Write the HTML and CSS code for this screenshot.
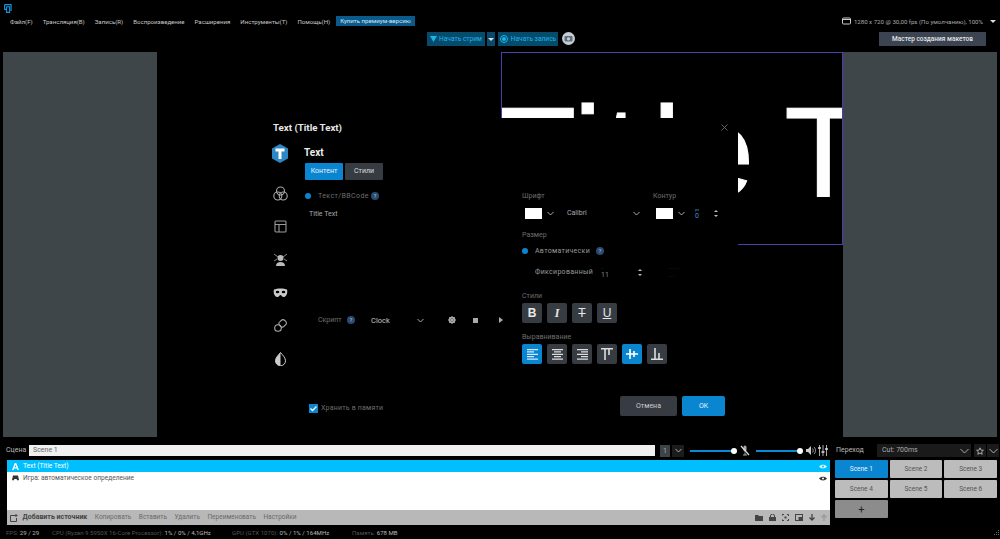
FILE: index.html
```html
<!DOCTYPE html>
<html lang="ru">
<head>
  <meta charset="UTF-8" />
  <title>Text (Title Text)</title>
  <link rel="stylesheet" href="styles.css">
</head>
<body>
  <div class="titlebar">
    <svg class="logo" width="9" height="9" viewBox="0 0 9 9"><path d="M.6.6h6.500v6.500M.6.6v4.800h2M2.600 2.800h3v5.600h-3z" fill="none" stroke="#1296d8" stroke-width="1.100"/></svg>
  </div>

  <div class="menubar">
    <span class="menu-item">Файл(F)</span>
    <span class="menu-item">Трансляция(B)</span>
    <span class="menu-item">Запись(R)</span>
    <span class="menu-item">Воспроизведение</span>
    <span class="menu-item">Расширения</span>
    <span class="menu-item">Инструменты(T)</span>
    <span class="menu-item">Помощь(H)</span>
    <span class="menu-item premium">Купить премиум-версию</span>
    <span class="menu-info">
      <svg width="9" height="8" viewBox="0 0 9 8"><rect x="0.5" y="1" width="8" height="6" rx="1" fill="none" stroke="#ccc"/><path d="M0.5 2.500h8" stroke="#ccc"/></svg>
      1280 x 720 @ 30,00 fps (По умолчанию), 100%
      <i class="tri"></i>
    </span>
  </div>

  <div class="toolbar">
    <span class="btn-live stream">
      <svg width="7" height="6" viewBox="0 0 7 6"><path d="M0 0h7L3.500 6z" fill="#19b5e6"/></svg>
      Начать стрим
    </span>
    <span class="btn-live stream-drop"><i class="tri"></i></span>
    <span class="btn-live record"><i class="rec-dot"></i>Начать запись</span>
    <span class="snap">
      <svg width="9" height="7" viewBox="0 0 9 7"><rect x="0.5" y="1" width="8" height="5.500" rx="1" fill="#5a7080"/><circle cx="4.500" cy="3.800" r="1.600" fill="#c6ccd0"/></svg>
    </span>
    <span class="btn-wizard">Мастер создания макетов</span>
  </div>

  <div class="preview">
    <div class="side-panel"></div>
    <div class="spacer"></div>
    <div class="canvas"><div class="canvas-text">Tit<span class="wide-l">l</span>e Text</div></div>
    <div class="side-panel"></div>
  </div>

  <div class="dialog">
    <div class="dialog-head">
      <span class="dialog-title">Text (Title Text)</span>
      <svg width="7" height="7" viewBox="0 0 7 7"><path d="M0.5 0.500l6 6M6.500 0.500l-6 6" stroke="#777" stroke-width="0.800"/></svg>
    </div>
    <div class="dialog-main">
      <div class="dialog-nav">
        <svg class="nav-first" width="18" height="19" viewBox="0 0 18 19"><path d="M9 0l8 4.600v9.800L9 19l-8-4.600V4.600z" fill="#2f86c5"/><path d="M4.500 4.500h9v3h-3V15h-3V7.500h-3z" fill="#fff"/></svg>
        <svg width="15" height="15" viewBox="0 0 15 15" fill="none" stroke="#aaa" stroke-width="1.100"><circle cx="7.500" cy="5" r="4"/><circle cx="4.800" cy="10" r="4"/><circle cx="10.200" cy="10" r="4"/></svg>
        <svg width="13" height="13" viewBox="0 0 13 13" fill="none" stroke="#999" stroke-width="1.100"><rect x="1" y="1" width="11" height="11" rx="1"/><path d="M1 4.500h11M5 4.500V12"/></svg>
        <svg width="15" height="15" viewBox="0 0 15 15"><circle cx="7.500" cy="6" r="3" fill="#bbb"/><path d="M3 14c0-3 2-4 4.500-4s4.500 1 4.500 4z" fill="#bbb"/><path d="M1 2l4 3M14 2l-4 3M1 9l3-2M14 9l-3-2" stroke="#888"/></svg>
        <svg width="15" height="10" viewBox="0 0 15 10"><path d="M1 1.500C4 0 11 0 14 1.500c1 3-.5 7-3 7.500-2 .3-2.500-2-3.500-2S6 9.300 4 9C1.500 8.500 0 4.500 1 1.500z" fill="#ccc"/><ellipse cx="4.500" cy="4" rx="1.800" ry="1.200" fill="#000"/><ellipse cx="10.500" cy="4" rx="1.800" ry="1.200" fill="#000"/></svg>
        <svg width="13" height="13" viewBox="0 0 13 13" fill="none" stroke="#aaa" stroke-width="1.100"><circle cx="4" cy="9" r="3.300"/><path d="M6 2.600l1.300-1.300a2.400 2.400 0 0 1 3.400 0l1 1a2.400 2.400 0 0 1 0 3.400L10 7.400a2.400 2.400 0 0 1-3.400 0l-1-1a2.400 2.400 0 0 1 .4-3.800z"/></svg>
        <svg width="11" height="14" viewBox="0 0 11 14"><path d="M5.500 0.500C8 3.500 10.500 5.800 10.500 8.800a5 5 0 0 1-10 0C.5 5.800 3 3.500 5.500.5z" fill="none" stroke="#ccc"/><path d="M5.500 .5C3 3.500.5 5.800.5 8.800a5 5 0 0 0 5 5z" fill="#ccc"/></svg>
      </div>

      <div class="col-left">
        <div class="section-title">Text</div>
        <div class="tabs">
          <span class="tab active">Контент</span>
          <span class="tab">Стили</span>
        </div>
        <div class="row text-row">
          <i class="radio"></i><span class="label spaced">Текст/BBCode</span><i class="help">?</i>
        </div>
        <div class="text-value">Title Text</div>
        <div class="row script-row">
          <span class="label script-label">Скрипт</span><i class="help">?</i>
          <span class="script-value">Clock</span>
          <svg class="chev script-chev" width="7" height="5" viewBox="0 0 7 5"><path d="M.5 1l3 3 3-3"/></svg>
          <svg class="script-gear" width="8" height="8" viewBox="0 0 8 8"><circle cx="4" cy="4" r="2.500" fill="none" stroke="#aaa" stroke-width="1.600"/><path d="M4 0v8M0 4h8M1.200 1.200l5.600 5.600M6.800 1.200L1.200 6.800" stroke="#aaa"/></svg>
          <i class="stop"></i>
          <i class="play"></i>
        </div>
        <label class="keep">
          <svg width="9" height="9" viewBox="0 0 9 9"><rect width="9" height="9" fill="#0a86d0"/><path d="M1.500 4.500l2 2 4-4" fill="none" stroke="#fff" stroke-width="1.300"/></svg>
          Хранить в памяти
        </label>
      </div>

      <div class="col-right">
        <div class="font-grid">
          <span class="label">Шрифт</span>
          <span class="label">Контур</span>
          <div class="row">
            <i class="swatch"></i>
            <svg class="chev swatch-chev" width="7" height="5" viewBox="0 0 7 5"><path d="M.5 1l3 3 3-3"/></svg>
            <span class="font-name">Calibri</span>
            <svg class="chev" width="7" height="5" viewBox="0 0 7 5"><path d="M.5 1l3 3 3-3"/></svg>
          </div>
          <div class="row">
            <i class="swatch"></i>
            <svg class="chev swatch-chev" width="7" height="5" viewBox="0 0 7 5"><path d="M.5 1l3 3 3-3"/></svg>
            <span class="px-field"><small>px</small>0</span>
            <span class="spin"><i></i><i></i></span>
          </div>
        </div>
        <div class="label size-label">Размер</div>
        <div class="row auto-row">
          <i class="radio"></i><span class="label bright">Автоматически</span><i class="help">?</i>
        </div>
        <div class="row fixed-row">
          <span class="label bright fixed-label">Фиксированный</span>
          <span class="num-field"><small>··</small>11</span>
          <span class="spin"><i></i><i></i></span>
          <span class="faint-field">· · · · ·<br>· · ·</span>
        </div>
        <div class="label styles-label">Стили</div>
        <div class="icon-row">
          <span class="icon-btn bold">B</span>
          <span class="icon-btn italic">I</span>
          <span class="icon-btn strike">T</span>
          <span class="icon-btn under">U</span>
        </div>
        <div class="label align-label">Выравнивание</div>
        <div class="icon-row">
          <span class="icon-btn on"><svg width="11" height="11" viewBox="0 0 11 11"><path d="M0 .5h11M0 2.900h7M0 5.300h11M0 7.700h7M0 10.200h11" stroke="#cfeaff" stroke-width="1.300"/></svg></span>
          <span class="icon-btn"><svg width="11" height="11" viewBox="0 0 11 11"><path d="M0 .5h11M2 2.900h7M0 5.300h11M2 7.700h7M0 10.200h11" stroke="#ddd" stroke-width="1.300"/></svg></span>
          <span class="icon-btn"><svg width="11" height="11" viewBox="0 0 11 11"><path d="M0 .5h11M4 2.900h7M0 5.300h11M4 7.700h7M0 10.200h11" stroke="#ddd" stroke-width="1.300"/></svg></span>
          <span class="icon-btn"><svg width="12" height="12" viewBox="0 0 12 12"><path d="M0 .7h12M4 1v11M8 1v6" stroke="#ddd" stroke-width="1.600"/></svg></span>
          <span class="icon-btn on"><svg width="12" height="12" viewBox="0 0 12 12"><path d="M0 6h12M4 1v10M8 3v6" stroke="#fff" stroke-width="1.600"/></svg></span>
          <span class="icon-btn"><svg width="12" height="12" viewBox="0 0 12 12"><path d="M0 11.300h12M4 0v11M8 5v6" stroke="#ddd" stroke-width="1.600"/></svg></span>
        </div>
        <div class="dialog-actions">
          <span class="btn-cancel">Отмена</span>
          <span class="btn-ok">OK</span>
        </div>
      </div>
    </div>
  </div>

  <div class="bottom">
    <div class="bottom-left">
      <div class="scene-row">
        <span class="scene-label scene-name">Сцена</span>
        <span class="scene-input">Scene 1</span>
        <span class="count">1</span>
        <span class="count-drop"><svg class="chev" width="7" height="5" viewBox="0 0 7 5"><path d="M.5 1l3 3 3-3"/></svg></span>
        <span class="slider first"><i></i></span>
        <svg class="mix-icon mic" width="10" height="11" viewBox="0 0 10 11"><rect x="3.500" y="0.500" width="3" height="6" rx="1.500" fill="#aaa"/><path d="M5 7.500V10M3 10h4" stroke="#aaa"/><path d="M1 1l8 9" stroke="#ddd" stroke-width="1.200"/></svg>
        <span class="slider"><i></i></span>
        <svg class="mix-icon" width="10" height="9" viewBox="0 0 10 9"><path d="M0 3h2l3-3v9L2 6H0z" fill="#ccc"/><path d="M6.500 2.500c1 1 1 3 0 4M8 1c2 2 2 5 0 7" fill="none" stroke="#ccc" stroke-width=".8"/></svg>
        <svg class="mix-icon last" width="10" height="11" viewBox="0 0 10 11"><path d="M1.500 0v11M5 0v11M8.500 0v11" stroke="#aaa"/><path d="M0 3h3M3.500 7h3M7 4h3" stroke="#ddd" stroke-width="1.600"/></svg>
      </div>
      <div class="sources">
        <div class="source selected">
          <svg width="7" height="7" viewBox="0 0 7 7"><path d="M0 7L2.800 0h1.400L7 7H5.400l-.5-1.500H2.100L1.600 7zM2.600 4.200h1.800L3.500 1.700z" fill="#fff"/></svg>
          <span class="source-name">Text (Title Text)</span>
          <svg class="eye" width="8" height="5" viewBox="0 0 8 5"><path d="M0 2.500C2 0 6 0 8 2.500 6 5 2 5 0 2.500z" fill="#dff5ff"/><circle cx="4" cy="2.500" r="1" fill="#00bfff"/></svg>
        </div>
        <div class="source">
          <svg width="7" height="6" viewBox="0 0 7 6"><path d="M1 .5h5l1 4.500-1.500.5L4.500 4h-2L1.500 5.500 0 5z" fill="#333"/></svg>
          <span class="source-name">Игра: автоматическое определение</span>
          <svg class="eye" width="8" height="5" viewBox="0 0 8 5"><path d="M0 2.500C2 0 6 0 8 2.500 6 5 2 5 0 2.500z" fill="#333"/><circle cx="4" cy="2.500" r="1" fill="#fff"/></svg>
        </div>
        <div class="source-tools">
          <svg width="8" height="8" viewBox="0 0 8 8" fill="none" stroke="#444"><path d="M5 1.500H.5v6h6V4M6 0v3M4.500 1.500h3"/></svg>
          <span class="tool strong">Добавить источник</span>
          <span class="tool">Копировать</span>
          <span class="tool">Вставить</span>
          <span class="tool">Удалить</span>
          <span class="tool">Переименовать</span>
          <span class="tool">Настройки</span>
          <span class="tool-icons">
            <svg width="8" height="6" viewBox="0 0 8 6"><path d="M0 0h3l1 1h4v5H0z" fill="#444"/></svg>
            <svg width="7" height="7" viewBox="0 0 7 7"><path d="M1.500 3V2a2 2 0 0 1 4 0v1" fill="none" stroke="#444"/><rect y="3" width="7" height="4" fill="#444"/></svg>
            <svg width="7" height="7" viewBox="0 0 7 7" fill="none" stroke="#444"><path d="M0 2V.5h2M5 .5h1.500V2M0 5v1.500h2M5 6.500h1.500V5"/><rect x="2.500" y="2.500" width="2" height="2" fill="#444" stroke="none"/></svg>
            <svg width="8" height="7" viewBox="0 0 8 7"><rect x=".5" y=".5" width="7" height="6" fill="none" stroke="#444"/><rect x="3.500" y="3" width="4" height="3.500" fill="#444"/></svg>
            <svg width="6" height="7" viewBox="0 0 6 7"><path d="M3 0v6M.5 3.500L3 6l2.500-2.500" fill="none" stroke="#444" stroke-width="1.300"/></svg>
            <svg width="6" height="7" viewBox="0 0 6 7"><path d="M3 7V1M.5 3.500L3 1l2.500 2.500" fill="none" stroke="#999" stroke-width="1.300"/></svg>
          </span>
        </div>
      </div>
      <div class="status">
        <span class="stat fps">FPS: <b>29 / 29</b></span>
        <span class="stat cpu">CPU (Ryzen 9 5950X 16-Core Processor): <b>1% / 0% / 4,1GHz</b></span>
        <span class="stat gpu">GPU (GTX 1070): <b>0% / 1% / 164MHz</b></span>
        <span class="stat">Память: <b>678 MB</b></span>
      </div>
    </div>

    <div class="bottom-right">
      <div class="transition-row">
        <span class="scene-label">Переход</span>
        <span class="combo">Cut: 700ms
          <svg class="chev" width="9" height="6" viewBox="0 0 9 6"><path d="M.5 1l4 4 4-4"/></svg>
        </span>
        <span class="mini"><svg class="chev" width="8" height="8" viewBox="0 0 8 8"><path d="M4 .8l1 2.300 2.400.2-1.800 1.600.6 2.400L4 6 1.800 7.300l.6-2.400L.6 3.300 3 3.100z"/></svg></span>
        <span class="mini"><svg class="chev" width="9" height="6" viewBox="0 0 9 6"><path d="M.5 1l4 4 4-4"/></svg></span>
      </div>
      <div class="scene-grid">
        <span class="scene-btn active">Scene 1</span>
        <span class="scene-btn">Scene 2</span>
        <span class="scene-btn">Scene 3</span>
        <span class="scene-btn">Scene 4</span>
        <span class="scene-btn">Scene 5</span>
        <span class="scene-btn">Scene 6</span>
        <span class="scene-btn add">+</span>
      </div>
    </div>
  </div>

  <svg class="grip" width="6" height="6" viewBox="0 0 6 6"><path d="M4 0h1v1H4zM2 2h1v1H2zM4 2h1v1H4zM0 4h1v1H0zM2 4h1v1H2zM4 4h1v1H4z" fill="#666"/></svg>
</body>
</html>
```

FILE: styles.css
```css
* {
  box-sizing: border-box;
}

html, body {
  height: 100%;
}

body {
  margin: 0;
  background: #000;
  color: #ccc;
  font-family: Roboto, "Noto Sans", sans-serif;
  font-size: 7px;
  line-height: 11px;
  overflow: hidden;
  display: flex;
  flex-direction: column;
  position: relative;
}

i {
  font-style: normal;
}

.row {
  display: flex;
  align-items: center;
}

.chev {
  fill: none;
  stroke: #aaa;
  stroke-width: 1;
  flex: none;
}

.tri {
  display: inline-block;
  width: 0;
  height: 0;
  border-left: 3px solid transparent;
  border-right: 3px solid transparent;
  border-top: 3px solid #ddd;
}

/* top bars */
.titlebar {
  height: 15px;
  padding: 4px 0 0 4px;
}

.logo {
  display: block;
}

.menubar {
  height: 12px;
  display: flex;
  align-items: center;
  padding-left: 10px;
  gap: 10px;
  color: #c8c8c8;
  font-size: 6.100px;
  white-space: nowrap;
}

.menu-item.premium {
  background: #0a5a8c;
  color: #d6e8f2;
  padding: 0 4px;
  height: 10px;
  line-height: 10px;
  margin-left: -4px;
}

.menu-info {
  margin-left: auto;
  margin-right: 4px;
  display: flex;
  align-items: center;
  gap: 3px;
  color: #aaa;
}

.menu-info .tri {
  margin-left: 4px;
}

.toolbar {
  height: 25px;
  padding: 5px 14px 6px 427px;
  display: flex;
  align-items: stretch;
  color: #1cb6e8;
  font-size: 6.600px;
}

.btn-live {
  background: #064a6c;
  display: flex;
  align-items: center;
  justify-content: center;
  gap: 2px;
  white-space: nowrap;
}

.stream {
  width: 58px;
}

.stream-drop {
  width: 8px;
  margin: 0 3px 0 2px;
}

.record {
  width: 60px;
}

.rec-dot {
  width: 4px;
  height: 4px;
  border-radius: 50%;
  background: #19b5e6;
  outline: 1px solid #19b5e6;
  outline-offset: 1px;
  margin: 0 3px 0 2px;
}

.snap {
  width: 13px;
  height: 13px;
  border-radius: 50%;
  background: #c6ccd0;
  margin-left: 4px;
  display: flex;
  align-items: center;
  justify-content: center;
}

.btn-wizard {
  margin-left: auto;
  width: 107px;
  background: #3b4450;
  color: #e4e6e8;
  display: flex;
  align-items: center;
  justify-content: center;
  font-size: 6.500px;
  font-weight: 500;
  white-space: nowrap;
}

/* preview */
.preview {
  height: 385px;
  display: flex;
  padding: 0 3px;
}

.side-panel {
  width: 154px;
  background: #3e4649;
}

.spacer {
  flex: 1;
}

.canvas {
  width: 342px;
  height: 192.500px;
  border: 1px solid #4b3fa8;
  overflow: hidden;
  position: relative;
}

.canvas-text {
  position: absolute;
  left: -4px;
  top: 26px;
  font-family: "Liberation Sans", sans-serif;
  font-size: 128px;
  line-height: 145px;
  letter-spacing: 2px;
  word-spacing: -7px;
  color: #fff;
  -webkit-text-stroke: 1px #fff;
  white-space: nowrap;
}

.wide-l {
  margin-left: 11px;
}

/* dialog */
.dialog {
  position: absolute;
  left: 259px;
  top: 118px;
  width: 479px;
  height: 312px;
  background: #000;
  padding: 0 10px 0 14px;
}

.dialog-head {
  height: 19px;
  display: flex;
  align-items: center;
  justify-content: space-between;
}

.dialog-title {
  color: #e8e8e8;
  font-size: 9.700px;
  font-weight: 700;
}

.dialog-main {
  display: flex;
}

.dialog-nav {
  width: 31px;
  display: grid;
  grid-template-columns: 14px;
  grid-template-rows: 40px repeat(6, 33px);
  align-items: center;
  justify-items: center;
  padding-right: 17px;
  height: 238px;
}

.nav-first {
  align-self: start;
  margin-top: 7px;
}

.col-left {
  width: 218px;
  position: relative;
}

.section-title {
  color: #eee;
  font-size: 10px;
  font-weight: 700;
  margin-top: 9px;
  line-height: 14px;
}

.tabs {
  display: flex;
  gap: 2px;
  margin: 3px 0 0 1px;
}

.tab {
  height: 17px;
  width: 38px;
  background: #363c42;
  color: #ddd;
  display: flex;
  align-items: center;
  justify-content: center;
  border-radius: 1px;
}

.tab.active {
  background: #0a86d0;
  color: #eef;
}

.label {
  color: #6e6e6e;
}

.label.bright {
  color: #9a9a9a;
}

.spaced {
  letter-spacing: 0.400px;
}

.radio {
  width: 6px;
  height: 6px;
  border-radius: 50%;
  background: #0a86d0;
  flex: none;
}

.help {
  width: 8px;
  height: 8px;
  border-radius: 50%;
  background: #2c4a70;
  color: #9cc;
  font-size: 6px;
  line-height: 8px;
  text-align: center;
  flex: none;
}

.text-row {
  margin: 10px 0 0 1px;
  height: 12px;
}

.text-row .label {
  margin-left: 7px;
  width: 53px;
}

.text-value {
  margin: 7px 0 0 5px;
  color: #aaa;
}

.script-row {
  margin-top: 94px;
  height: 12px;
}

.script-label {
  margin-left: 14px;
  width: 29px;
}

.script-value {
  margin-left: 16px;
  color: #c4c4c4;
  font-size: 7.500px;
  width: 46px;
}

.script-chev {
  margin-right: 24px;
}

.stop {
  width: 5px;
  height: 5px;
  background: #aaa;
  margin-left: 17px;
}

.play {
  width: 0;
  height: 0;
  border-left: 4px solid #aaa;
  border-top: 3px solid transparent;
  border-bottom: 3px solid transparent;
  margin-left: 21px;
}

.keep {
  display: flex;
  align-items: center;
  gap: 3px;
  margin: 77px 0 0 5px;
  color: #6e6e6e;
  letter-spacing: 0.200px;
}

.col-right {
  flex: 1;
  padding-top: 54px;
}

.font-grid {
  display: grid;
  grid-template-columns: 131px 1fr;
  row-gap: 6px;
}

.font-grid .row {
  height: 11px;
}

.swatch {
  width: 17px;
  height: 11px;
  background: #fff;
  margin-left: 3px;
  flex: none;
}

.swatch-chev {
  margin-left: 5px;
}

.font-name {
  margin-left: 13px;
  width: 66px;
  color: #aaa;
}

.px-field {
  margin-left: 10px;
  display: flex;
  flex-direction: column;
  color: #4a90c0;
  line-height: 8px;
  width: 19px;
}

.px-field small {
  font-size: 4px;
  line-height: 5px;
}

.spin {
  display: flex;
  flex-direction: column;
  gap: 3px;
}

.spin i {
  width: 0;
  height: 0;
  border-left: 2px solid transparent;
  border-right: 2px solid transparent;
  border-bottom: 2px solid #bbb;
}

.spin i + i {
  border-bottom: 0;
  border-top: 2px solid #bbb;
}

.size-label {
  margin-top: 11px;
}

.auto-row {
  margin-top: 4px;
  height: 12px;
}

.auto-row .label {
  margin-left: 7px;
  margin-right: 6px;
  letter-spacing: 0.300px;
  width: 55px;
}

.fixed-row {
  margin: 8px 0 0 13px;
  height: 14px;
}

.fixed-label {
  width: 58px;
  letter-spacing: 0.300px;
}

.num-field {
  width: 37px;
  margin-left: 8px;
  display: flex;
  flex-direction: column;
  color: #888;
  line-height: 8px;
}

.num-field small {
  font-size: 5px;
  line-height: 5px;
  color: #555;
}

.faint-field {
  margin-left: 26px;
  font-size: 5px;
  line-height: 8px;
  color: #555;
}

.styles-label {
  margin-top: 12px;
}

.icon-row {
  display: flex;
  gap: 5px;
  margin-top: 1px;
}

.icon-btn {
  width: 20px;
  height: 20px;
  background: #373c42;
  border-radius: 2px;
  color: #e8e8e8;
  font-family: "Liberation Sans", sans-serif;
  font-size: 12px;
  display: flex;
  align-items: center;
  justify-content: center;
}

.icon-btn.on {
  background: #0a86d0;
}

.bold {
  font-weight: 700;
}

.italic {
  font-style: italic;
  font-weight: 700;
  font-family: "Liberation Serif", serif;
}

.strike {
  text-decoration: line-through;
}

.under {
  text-decoration: underline;
}

.align-label {
  margin: 9px 0 1px;
}

.dialog-actions {
  display: flex;
  justify-content: flex-end;
  gap: 5px;
  margin: 32px 3px 0 0;
}

.btn-cancel, .btn-ok {
  height: 20px;
  border-radius: 2px;
  display: flex;
  align-items: center;
  justify-content: center;
}

.btn-cancel {
  width: 57px;
  background: #373c42;
  color: #ccc;
}

.btn-ok {
  width: 43px;
  background: #0a86d0;
  color: #e6f4ff;
}

/* bottom panel */
.bottom {
  flex: 1;
  display: flex;
  padding: 7px 3px 0 7px;
}

.bottom-left {
  flex: none;
  width: 823px;
}

.scene-row {
  height: 13px;
  display: flex;
  align-items: center;
  margin-left: -1px;
}

.scene-label {
  color: #bbb;
}

.scene-name {
  width: 23px;
}

.scene-input {
  width: 626px;
  height: 11px;
  background: #f0f0f0;
  color: #666;
  padding-left: 4px;
  line-height: 11px;
}

.count {
  width: 10px;
  height: 12px;
  background: #3c4448;
  color: #aaa;
  margin-left: 5px;
  text-align: center;
  line-height: 12px;
}

.count-drop {
  width: 12px;
  height: 12px;
  margin-left: 2px;
  background: #1c1c1c;
  display: flex;
  align-items: center;
  justify-content: center;
}

.slider {
  width: 45px;
  height: 2px;
  background: #0a8ad6;
  position: relative;
  margin-left: 5px;
}

.slider.first {
  margin-left: 6px;
}

.slider i {
  position: absolute;
  right: -2px;
  top: -2px;
  width: 6px;
  height: 6px;
  border-radius: 50%;
  background: #fff;
}

.mix-icon {
  margin-left: 5px;
  flex: none;
}

.mic {
  margin: 0 1px 0 5px;
}

.mix-icon.last {
  margin-left: 2px;
}

.sources {
  margin-top: 3px;
  height: 65px;
  background: #fff;
  display: flex;
  flex-direction: column;
  color: #555;
}

.source {
  height: 12px;
  display: flex;
  align-items: center;
  padding: 0 3px 0 5px;
  gap: 4px;
  font-size: 6.600px;
}

.source.selected {
  background: #00bfff;
  color: #fff;
}

.eye {
  margin-left: auto;
}

.source-tools {
  margin-top: auto;
  height: 15px;
  background: #b8b8b8;
  display: flex;
  align-items: center;
  gap: 7.500px;
  padding: 0 3px 0 3px;
  color: #6a6a6a;
  font-size: 6.500px;
}

.tool.strong {
  font-size: 7px;
  font-weight: 700;
  color: #444;
  margin-left: -3px;
}

.tool-icons {
  margin-left: auto;
  display: flex;
  align-items: center;
  gap: 6px;
}

.status {
  display: flex;
  height: 14px;
  align-items: center;
  color: #555;
  font-size: 6.100px;
  white-space: nowrap;
  margin-left: -1px;
}

.stat b {
  font-weight: 400;
  color: #bbb;
}

.fps {
  width: 46px;
}

.cpu {
  width: 180px;
}

.gpu {
  width: 120px;
}

.bottom-right {
  flex: 1;
  min-width: 0;
  margin-left: 5px;
}

.transition-row {
  height: 13px;
  display: flex;
  gap: 1px;
  align-items: center;
}

.transition-row .scene-label {
  flex: none;
  width: 40px;
  margin-left: 1px;
}

.combo {
  flex: none;
  width: 94px;
  height: 13px;
  background: #1a1a1a;
  color: #aaa;
  display: flex;
  align-items: center;
  justify-content: space-between;
  padding: 0 2px 0 5px;
  margin-right: 2px;
}

.mini {
  flex: none;
  width: 12px;
  height: 13px;
  background: #1a1a1a;
  color: #aaa;
  display: flex;
  align-items: center;
  justify-content: center;
}

.scene-grid {
  display: grid;
  grid-template-columns: repeat(3, 1fr);
  gap: 2px;
  margin-top: 3px;
}

.scene-btn {
  height: 18px;
  background: #bcbcbc;
  color: #555;
  font-size: 6.500px;
  border-radius: 1px;
  display: flex;
  align-items: center;
  justify-content: center;
}

.scene-btn.active {
  background: #0a86d0;
  color: #eef;
}

.scene-btn.add {
  background: #8c8c8c;
  color: #222;
  font-size: 11px;
}

.grip {
  position: absolute;
  right: 0;
  bottom: 3px;
}
```
